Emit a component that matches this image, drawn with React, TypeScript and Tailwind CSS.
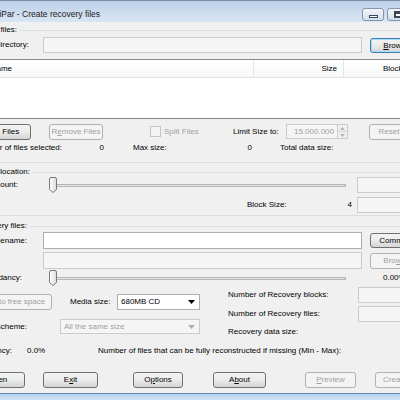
import type { ReactNode } from 'react'
import clsx from 'clsx'

function Clip({ className, children }: { className?: string; children: ReactNode }) {
  // keeps the right edge fixed, lets the text run off the left side
  return <div className={clsx('flex shrink-0 justify-end whitespace-nowrap', className)}>{children}</div>
}

function Btn({
  children,
  className,
  disabled,
  def,
}: {
  children: ReactNode
  className?: string
  disabled?: boolean
  def?: boolean
}) {
  return (
    <div
      className={clsx(
        'flex shrink-0 items-center justify-center whitespace-nowrap rounded-[3px] border',
        disabled
          ? 'border-[#adb2b5] bg-[#f4f4f4] text-[#a0a0a0]'
          : 'bg-gradient-to-b from-[#f4f4f4] via-[#ebebeb] to-[#d4d4d4] text-black',
        !disabled && (def ? 'border-[#3c7fb1] shadow-[inset_0_0_0_1px_#a6dcf6]' : 'border-[#707070]'),
        className,
      )}
    >
      {children}
    </div>
  )
}

function Box({ className, white }: { className?: string; white?: boolean }) {
  return (
    <div
      className={clsx(
        'shrink-0 border',
        white ? 'border-[#abadb3] bg-white' : 'border-[#c9cbcf] bg-[#f5f5f5]',
        className,
      )}
    />
  )
}

function Slider({ className }: { className?: string }) {
  return (
    <div className={clsx('relative shrink-0', className)}>
      <div className="absolute left-[2px] right-0 top-[7px] h-[3px] border border-[#b4b4b4] bg-[#e6e6e6]" />
      <svg className="absolute left-0 top-0" width="8" height="16" viewBox="0 0 8 16">
        <defs>
          <linearGradient id="thumb" x1="0" y1="0" x2="1" y2="0">
            <stop offset="0" stopColor="#ffffff" />
            <stop offset="1" stopColor="#dcdcdc" />
          </linearGradient>
        </defs>
        <path d="M0.5 2 Q0.5 0.5 2 0.5 H6 Q7.5 0.5 7.5 2 V12.5 L4 15.5 L0.5 12.5 Z" fill="url(#thumb)" stroke="#7a7a7a" />
      </svg>
    </div>
  )
}

function Select({ text, className, disabled }: { text: string; className?: string; disabled?: boolean }) {
  return (
    <div
      className={clsx(
        'flex shrink-0 items-center justify-between border pl-[3px] pr-[4px]',
        disabled ? 'border-[#c9cbcf] bg-[#f5f5f5] text-[#a0a0a0]' : 'border-[#abadb3] bg-white',
        className,
      )}
    >
      <span>{text}</span>
      <svg width="7" height="4" viewBox="0 0 7 4">
        <polygon points="0,0 7,0 3.5,4" fill={disabled ? '#b0b0b0' : '#000000'} />
      </svg>
    </div>
  )
}

function GroupTitle({ className, children }: { className?: string; children: ReactNode }) {
  return (
    <div className="flex h-[10px] shrink-0 items-center">
      <Clip className={className}>{children}</Clip>
      <div className="ml-[3px] h-px flex-1 bg-[#d5dfe5]" />
    </div>
  )
}

export default function App() {
  return (
    <div className="h-[400px] w-[400px] overflow-hidden bg-[#f0f0f0] font-['Liberation_Sans',Arial,sans-serif] text-[8px] leading-none text-black">
      <div className="flex h-[400px] w-[420px] flex-col">
        {/* title bar */}
        <div className="flex h-[22px] shrink-0 items-start border-t border-[#7b8da3] bg-gradient-to-b from-[#bdd1e9] to-[#d9e5f2]">
          <Clip className="mt-[9px] w-[100px] text-[8.5px] text-[#1b1b1b]">MultiPar - Create recovery files</Clip>
          <div className="ml-[262px] mt-[7px] flex gap-[3px]">
            <div className="flex h-[13px] w-[22px] items-end justify-center rounded-[3px] border border-[#8597b0] bg-gradient-to-b from-[#f3f6fa] to-[#d3dde9] pb-[2px]">
              <div className="h-[3px] w-[9px] border border-[#3b4757] bg-white" />
            </div>
            <div className="flex h-[13px] w-[22px] items-center justify-center rounded-[3px] border border-[#8597b0] bg-gradient-to-b from-[#f3f6fa] to-[#d3dde9]">
              <div className="h-[7px] w-[9px] border-2 border-t-[3px] border-[#3b4757] bg-white" />
            </div>
          </div>
        </div>

        {/* input files */}
        <div className="mt-[2px] flex h-[12px] shrink-0 items-center">
          <Clip className="w-[17px]">Input files:</Clip>
          <div className="ml-[3px] h-px flex-1 bg-[#d5dfe5]" />
        </div>
        <div className="mt-[1px] flex h-[16px] shrink-0 items-end">
          <Clip className="w-[29px] self-center">Base directory:</Clip>
          <Box className="ml-[14px] h-full w-[319px]" />
          <Btn def className="ml-[8px] h-[15px] w-[60px]">
            <span>
              <u>B</u>rowse...
            </span>
          </Btn>
        </div>

        {/* file list */}
        <div className="mt-[6px] h-[60px] shrink-0 border-y border-[#828790] bg-white">
          <div className="flex h-[18px] border-b border-[#e2e2e2] bg-gradient-to-b from-white to-[#f7f8f9]">
            <div className="flex w-[254px] items-center border-r border-[#e5e5e5]">
              <Clip className="w-[12px]">Name</Clip>
            </div>
            <div className="flex w-[90px] items-center justify-end border-r border-[#e5e5e5] pr-[6px]">Size</div>
            <div className="flex flex-1 items-center pl-[39px]">Blocks</div>
          </div>
        </div>

        <div className="mt-[4px] flex h-[17px] shrink-0 items-center">
          <Clip className="h-[16px] w-[31px]">
            <Btn className="h-full w-[57px]">Add Files</Btn>
          </Clip>
          <Btn disabled className="ml-[18px] h-[16px] w-[54px]">
            <span>
              R<u>e</u>move Files
            </span>
          </Btn>
          <div className="ml-[47px] flex w-[83px] shrink-0 items-center">
            <div className="h-[11px] w-[11px] border border-[#c2c6ca] bg-[#f4f4f4]" />
            <span className="ml-[3px] text-[#a0a0a0]">Split Files</span>
          </div>
          <div className="w-[53px] shrink-0">Limit Size to:</div>
          <div className="flex h-[15px] w-[52px] shrink-0 items-center justify-end border border-[#c9cbcf] bg-[#f5f5f5] pr-[3px] text-[#a0a0a0]">
            15.000.000
          </div>
          <div className="flex h-[15px] w-[10px] shrink-0 flex-col border border-l-0 border-[#c9cbcf] bg-[#f0f0f0]">
            <div className="flex flex-1 items-center justify-center border-b border-[#d4d4d4]">
              <svg width="5" height="3" viewBox="0 0 5 3">
                <polygon points="0,3 5,3 2.5,0" fill="#b4b4b4" />
              </svg>
            </div>
            <div className="flex flex-1 items-center justify-center">
              <svg width="5" height="3" viewBox="0 0 5 3">
                <polygon points="0,0 5,0 2.5,3" fill="#b4b4b4" />
              </svg>
            </div>
          </div>
          <Btn disabled className="ml-[21px] h-[16px] w-[40px]">Reset</Btn>
        </div>

        <div className="mt-[3px] flex h-[10px] shrink-0 items-center">
          <Clip className="w-[62px]">Number of files selected:</Clip>
          <div className="flex w-[42px] shrink-0 justify-end">0</div>
          <div className="ml-[29px] flex w-[119px] shrink-0 justify-between">
            <span>Max size:</span>
            <span>0</span>
          </div>
          <div className="ml-[28px]">Total data size:</div>
        </div>

        {/* block allocation */}
        <div className="mt-[9px] h-px shrink-0 bg-[#d5dfe5]" />
        <div className="mt-[4px]">
          <GroupTitle className="w-[30px]">Block allocation:</GroupTitle>
        </div>
        <div className="flex h-[16px] shrink-0 items-center">
          <Clip className="w-[18px]">Block count:</Clip>
          <Slider className="ml-[31px] h-[16px] w-[297px]" />
          <Box className="ml-[11px] h-full w-[60px]" />
        </div>
        <div className="mt-[4px] flex h-[16px] shrink-0 items-center">
          <div className="ml-[247px] flex w-[105px] shrink-0 justify-between">
            <span>Block Size:</span>
            <span>4</span>
          </div>
          <Box className="ml-[5px] h-full w-[60px]" />
        </div>

        {/* recovery files */}
        <div className="mt-[2px] h-px shrink-0 bg-[#d5dfe5]" />
        <div className="mt-[5px]">
          <GroupTitle className="w-[27px]">Recovery files:</GroupTitle>
        </div>
        <div className="mt-[1px] flex h-[17px] shrink-0 items-center">
          <Clip className="w-[27px]">Base filename:</Clip>
          <Box white className="ml-[16px] h-full w-[319px]" />
          <Btn className="ml-[8px] h-[15px] w-[60px]">Comment...</Btn>
        </div>
        <div className="mt-[3px] flex h-[17px] shrink-0 items-center">
          <Box className="ml-[43px] h-full w-[319px]" />
          <Btn disabled className="ml-[8px] h-[16px] w-[60px]">
            <span>
              Bro<u>w</u>se...
            </span>
          </Btn>
        </div>
        <div className="mt-[1px] flex h-[16px] shrink-0 items-center">
          <Clip className="w-[22px]">Redundancy:</Clip>
          <Slider className="ml-[27px] h-[16px] w-[297px]" />
          <div className="ml-[37px]">0.00%</div>
        </div>

        <div className="mt-[1px] flex h-[50px] shrink-0">
          <div className="flex w-[220px] shrink-0 flex-col">
            <div className="mt-[7px] flex h-[16px] items-center">
              <Clip className="h-full w-[52px]">
                <Btn disabled className="h-full w-[71px]">Fit to free space</Btn>
              </Clip>
              <div className="ml-[18px] w-[47px] shrink-0">Media size:</div>
              <Select className="h-full w-[83px]" text="680MB CD" />
            </div>
            <div className="mt-[9px] flex h-[15px] items-center">
              <Clip className="w-[27px]">Sizing scheme:</Clip>
              <Select disabled className="ml-[33px] h-full w-[140px]" text="All the same size" />
            </div>
          </div>
          <div className="flex flex-1 flex-col pl-[8px]">
            <div className="flex h-[16px] items-center">
              <div className="w-[130px] shrink-0">Number of Recovery blocks:</div>
              <Box className="h-full w-[60px]" />
            </div>
            <div className="mt-[3px] flex h-[16px] items-center">
              <div className="w-[130px] shrink-0">Number of Recovery files:</div>
              <Box className="h-full w-[60px]" />
            </div>
            <div className="mt-[5px] flex h-[10px] items-center">Recovery data size:</div>
          </div>
        </div>

        <div className="mt-[9px] flex h-[10px] shrink-0 items-center">
          <Clip className="w-[12px]">Efficiency:</Clip>
          <div className="ml-[15px] w-[71px] shrink-0">0.0%</div>
          <div className="whitespace-nowrap">Number of files that can be fully reconstructed if missing (Min - Max):</div>
        </div>

        {/* bottom buttons */}
        <div className="mt-[16px] flex h-[16px] shrink-0">
          <Clip className="h-full w-[25px]">
            <Btn className="h-full w-[55px]">Open</Btn>
          </Clip>
          <Btn className="ml-[18px] h-full w-[55px]">
            <span>
              E<u>x</u>it
            </span>
          </Btn>
          <Btn className="ml-[35px] h-full w-[50px]">
            <span>
              O<u>p</u>tions
            </span>
          </Btn>
          <Btn className="ml-[30px] h-full w-[53px]">
            <span>
              A<u>b</u>out
            </span>
          </Btn>
          <Btn disabled className="ml-[39px] h-full w-[51px]">
            <span>
              <u>P</u>review
            </span>
          </Btn>
          <Btn disabled className="ml-[19px] h-full w-[40px]">Create</Btn>
        </div>

        <div className="mt-[5px] h-[7px] shrink-0 border-t border-[#5a86b8] bg-gradient-to-b from-[#b9d2ee] to-[#cfe0f3]" />
      </div>
    </div>
  )
}
